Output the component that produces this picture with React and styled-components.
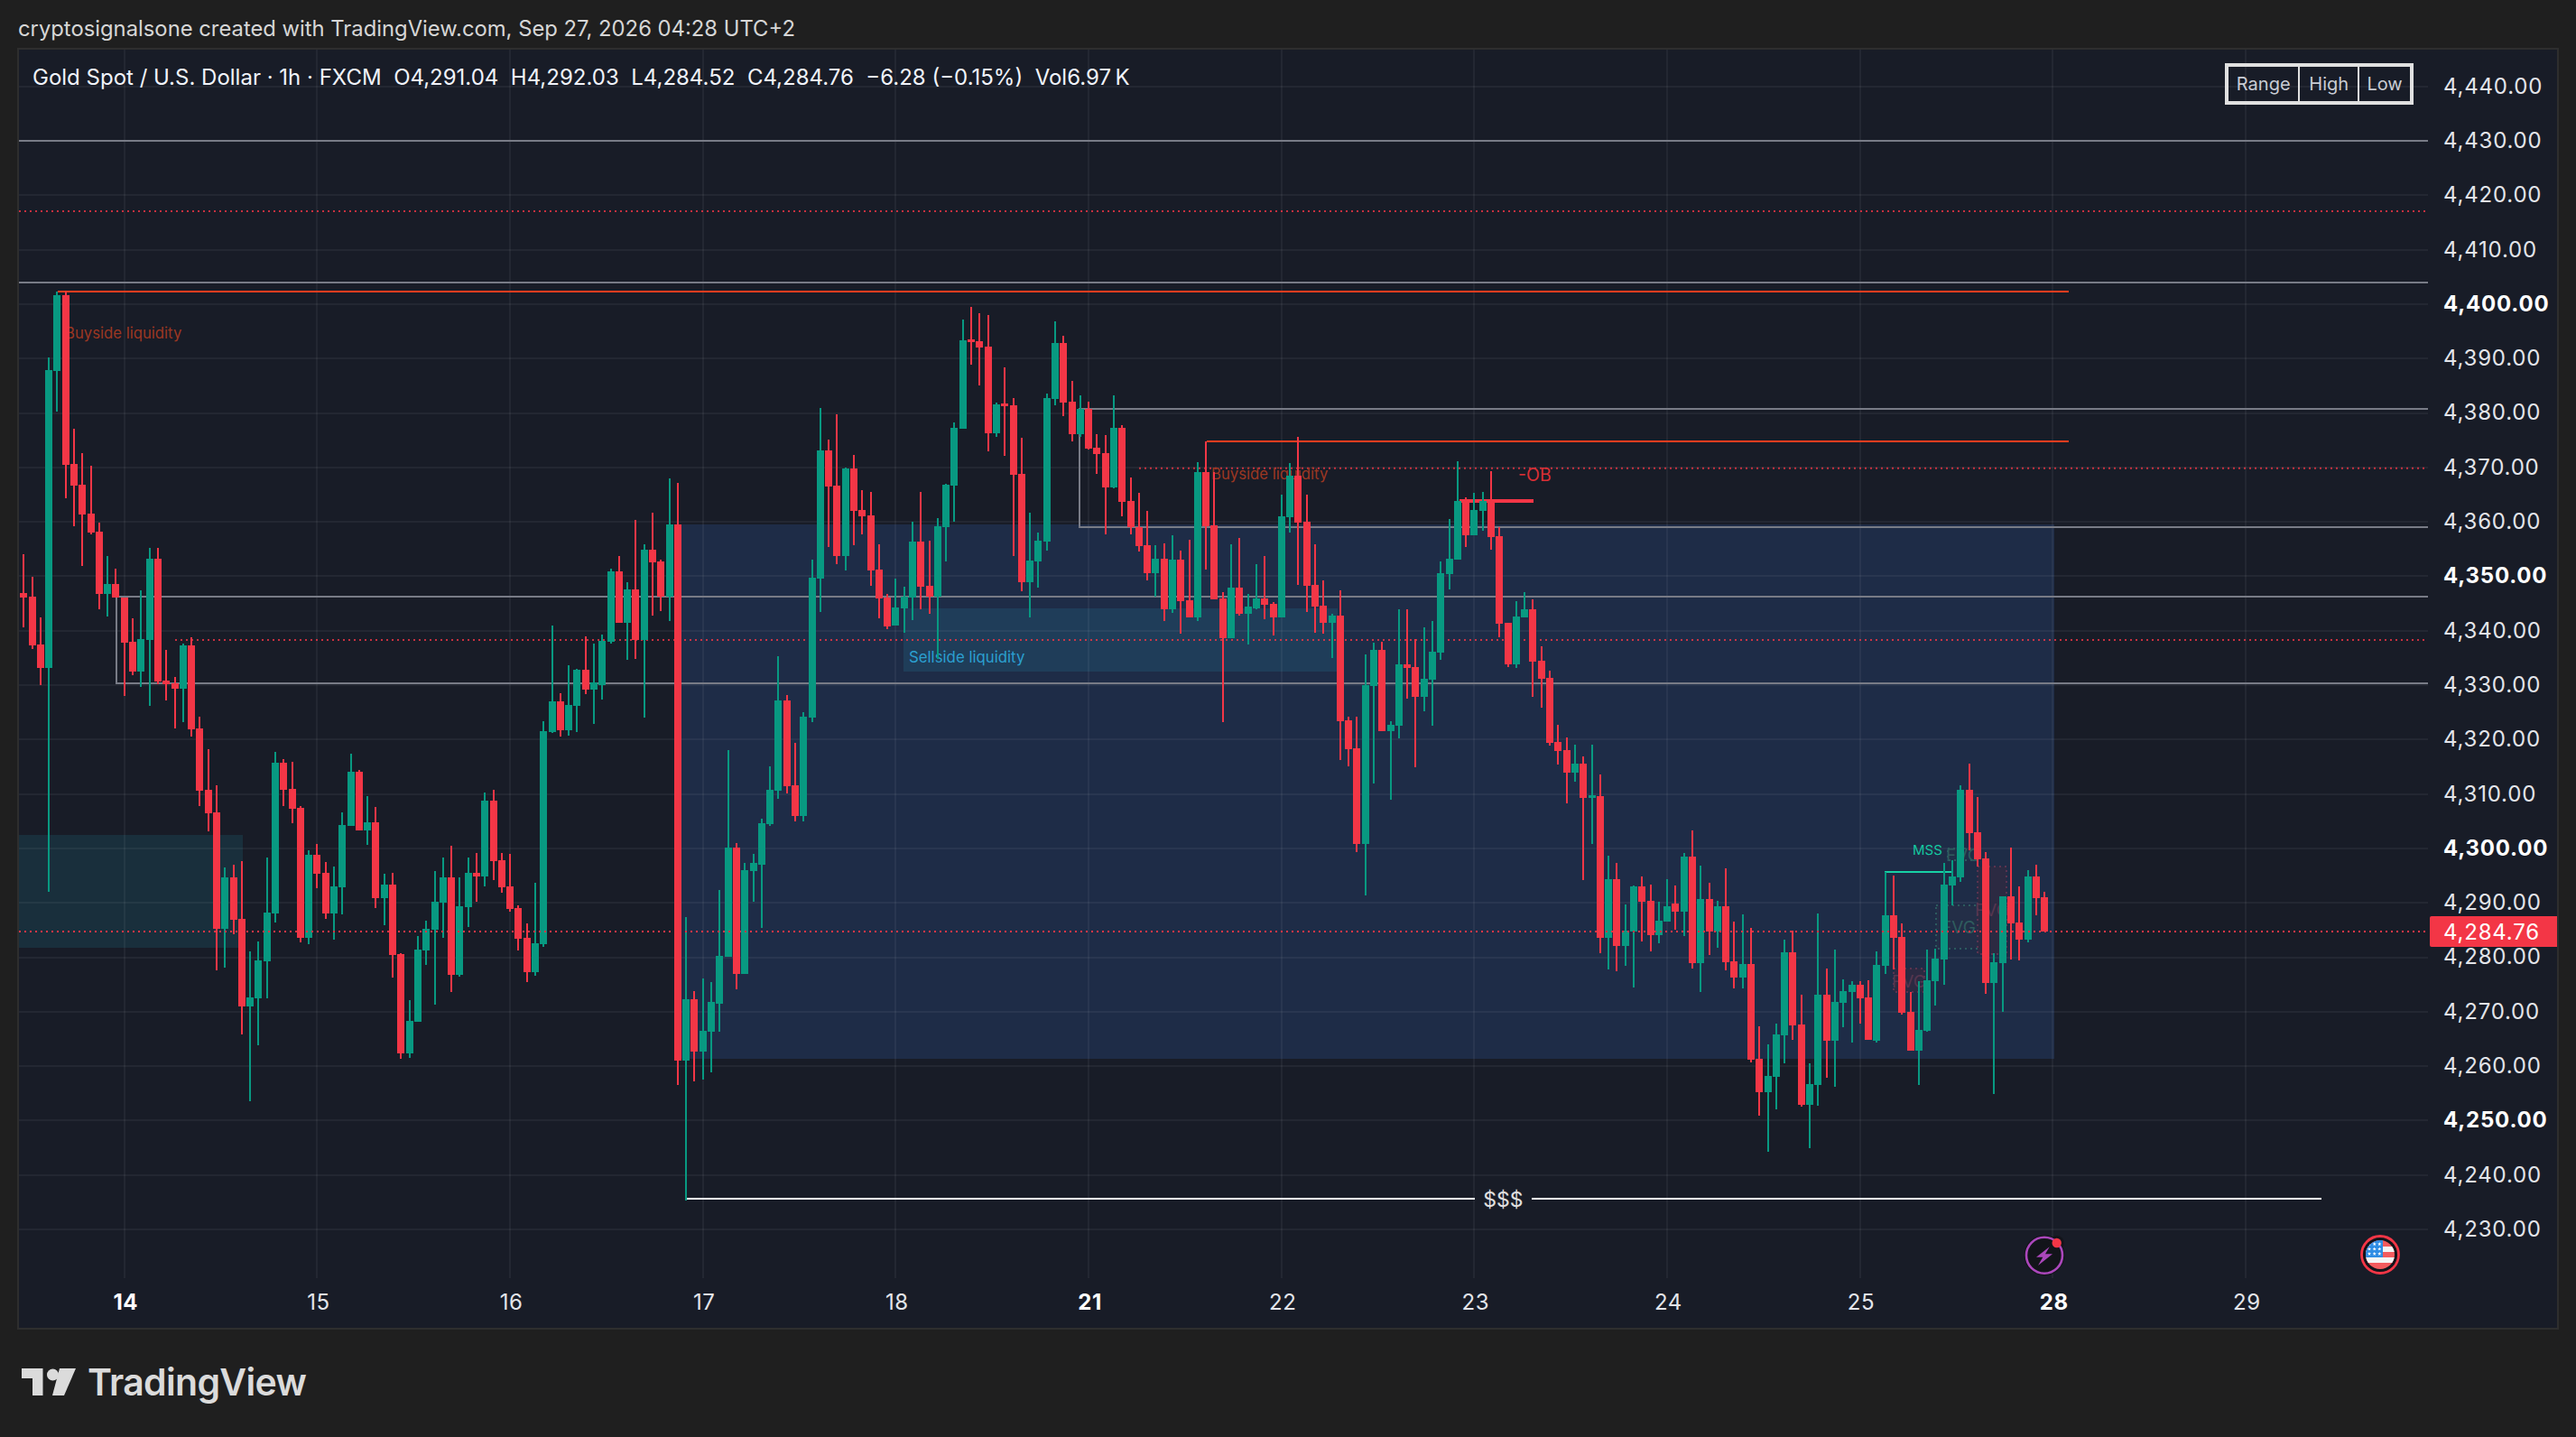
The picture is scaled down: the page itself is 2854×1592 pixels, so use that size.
import React from 'react'
import styled, { createGlobalStyle } from 'styled-components'

const UP = '#089981'
const DOWN = '#f33646'

const GlobalStyle = createGlobalStyle`
  html, body {
    margin: 0;
    background: #1f1f1f;
  }
  body {
    font-family: Inter, "Liberation Sans", sans-serif;
  }
`

const Page = styled.div`
  width: 2854px;
  height: 1592px;
  display: flex;
  flex-direction: column;
  background: #1f1f1f;
  overflow: hidden;
`
const Caption = styled.div`
  height: 53px;
  padding: 18px 0 0 20px;
  box-sizing: border-box;
  font-size: 23.8px;
  line-height: 28px;
  color: #d6d6d6;
  white-space: nowrap;
`
const ChartFrame = styled.div`
  margin-left: 19px;
  width: 2816px;
  height: 1420px;
  box-sizing: border-box;
  border: 2px solid #2e2e2e;
  background: #181c27;
  display: grid;
  grid-template-columns: 2669px 143px;
  grid-template-rows: 1361px 55px;
`
const Plot = styled.div`
  position: relative;
  overflow: hidden;
`
const PlotSvg = styled.svg`
  display: block;
  width: 2669px;
  height: 1361px;
`
const Legend = styled.div`
  position: absolute;
  left: 15px;
  top: 17px;
  display: flex;
  gap: 13.5px;
  font-size: 24px;
  line-height: 28px;
  color: #f0f3fa;
  white-space: nowrap;
`
const RangeBox = styled.div`
  position: absolute;
  left: 2444px;
  top: 15px;
  width: 209px;
  height: 46px;
  box-sizing: border-box;
  border: 4px solid #e0e0e0;
  display: flex;
`
const RangeCell = styled.div`
  width: ${p => p.$w}px;
  display: flex;
  align-items: center;
  justify-content: center;
  font-size: 20px;
  color: #c9ccd4;
  & + & {
    border-left: 2px solid #e0e0e0;
  }
`
const PriceScale = styled.div`
  position: relative;
  padding: 10px 0 0 17px;
`
const PriceLabel = styled.div`
  height: 60.3px;
  display: flex;
  align-items: center;
  font-size: 24px;
  letter-spacing: 0.8px;
  font-weight: ${p => (p.$major ? 700 : 400)};
  color: ${p => (p.$major ? '#ffffff' : '#e3e5ea')};
`
const LastPriceTag = styled.div`
  position: absolute;
  left: 2px;
  top: 960px;
  width: 141px;
  height: 34px;
  padding-left: 15px;
  box-sizing: border-box;
  display: flex;
  align-items: center;
  background: ${DOWN};
  border-radius: 2px 0 0 2px;
  font-size: 24px;
  letter-spacing: 0.8px;
  color: #ffffff;
`
const TimeScale = styled.div`
  display: flex;
  padding-left: 11.5px;
`
const TimeLabel = styled.div`
  width: 213.65px;
  height: 55px;
  padding-bottom: 3px;
  box-sizing: border-box;
  display: flex;
  align-items: center;
  justify-content: center;
  font-size: 24px;
  letter-spacing: 0.6px;
  font-weight: ${p => (p.$major ? 700 : 400)};
  color: ${p => (p.$major ? '#ffffff' : '#e3e5ea')};
`
const Brand = styled.div`
  display: flex;
  align-items: center;
  gap: 13px;
  padding: 35px 0 0 24px;
  color: #dbdbdb;
`
const BrandName = styled.span`
  font-size: 41px;
  line-height: 46px;
  font-weight: 600;
  letter-spacing: -0.7px;
`
const PlotLabel = styled.text`
  font-family: Inter, "Liberation Sans", sans-serif;
  font-size: ${p => p.$size}px;
  fill: ${p => p.$color};
  dominant-baseline: central;
`

const priceY = price => 95.7 + (4440 - price) * 6.03
const barX = n => Math.round(26.3 + 9.29 * n)

// bars are read off the screenshot as: colour wickTop bodyTop bodyBottom wickBottom
const segment = (start, y0, k, text) =>
  text.trim().split(/,\s*/).map((row, i) => {
    const [c, ...v] = row.split(' ')
    const [wt, bt, bb, wb] = v.map(a => y0 + Number(a) / k)
    return { n: start + i, up: c === 'g', wt, bt, bb, wb }
  })

const bars = [
  ...segment(-1, 550, 2.24, `g 240 240 270 270, r 143 240 251 325, r 199 249 370 379, r 300 367 426 468`),
  ...segment(3, 310, 3, `g 258 300 1290 2034, g 40 50 302 438, r 40 50 614 725, r 495 612 684 820,
    r 576 681 780 951, r 618 777 840 845`),
  ...segment(9, 550, 2.24, `r 64 87 241 279, g 148 217 241 297, r 180 217 250 250, r 250 250 363 494,
    r 302 361 435 443, g 233 354 435 472, g 128 155 356 520, r 128 155 459 466, r 381 457 466 507,
    r 447 463 477 575, g 365 370 477 560, r 349 370 578 596, r 547 576 730 768, r 627 728 786 831,
    r 717 784 1073 1176, g 921 945 1073 1169, r 914 945 1051 1086, r 905 1048 1266 1335,
    g 1129 1243 1266 1500, g 1104 1151 1245 1362, g 896 1033 1154 1245, g 634 661 1035 1057,
    r 652 661 728 768, r 659 726 775 811, r 768 773 1095 1107, g 878 889 1095 1111, r 862 889 936 972,
    r 907 934 1035 1048, g 918 968 1035 1100, g 784 815 970 1037, g 638 683 818 818, r 679 683 829 829,
    g 744 809 829 865, r 771 809 997 1021, g 936 963 997 1064, r 934 963 1138 1194, r 1133 1136 1382 1396,
    g 1250 1301 1382 1393, g 1091 1124 1304 1304, g 1053 1073 1127 1163, g 930 1006 1075 1261,
    g 896 945 1008 1095, r 867 945 1187 1230, g 945 1017 1187 1192, g 896 934 1019 1068, r 885 934 943 1006,
    g 735 755 943 968, r 728 755 905 952, r 885 903 970 983, r 887 968 1024 1030, r 1015 1021 1098 1127,
    r 1060 1095 1180 1205, g 959 1109 1180 1189, g 558 582 1111 1118, g 320 508 585 587, r 488 508 580 596,
    g 419 517 580 594, g 428 430 519 585, r 347 430 479 491, g 365 461 479 564, g 343 358 468 504,
    g 179 186 361 365, r 148 186 314 314, g 213 231 314 405`),
  ...segment(73, 300, 1.65, `r 456 583 675 710, g 500 510 675 817, r 442 510 533 631, r 528 531 596 622,
    g 380 464 596 641, r 388 464 1443 1489, g 1182 1332 1443 1699, r 1317 1332 1428 1482, g 1294 1390 1428 1478,
    g 1301 1337 1391 1466, g 1132 1253 1339 1391, g 876 1055 1254 1254, r 1046 1055 1286 1314, g 1083 1096 1286 1286,
    g 1066 1083 1098 1154, g 1002 1010 1085 1202, g 906 949 1012 1015, g 705 786 951 966, r 776 786 942 956,
    r 863 941 997 1007, g 807 815 997 1007, g 528 561 817 825, g 251 328 563 624, r 309 328 394 505, r 262 393 522 536,
    g 360 361 522 548, r 337 361 439 502, r 401 437 449 482, r 404 447 548 576, r 500 546 599 635, r 591 597 650 655,
    g 563 616 649 649, g 578 595 617 662, g 459 495 597 639, r 404 495 578 619, r 494 576 595 627, g 452 467 595 710,
    g 390 391 469 531, g 277 287 393 459, g 89 127 289 289, r 66 125 128 172, r 78 129 140 210, r 81 139 297 330,
    g 241 244 297 304, r 177 243 246 338, r 233 246 373 522, r 305 371 569 586, g 442 530 569 634, g 479 494 531 579,
    g 224 233 495 512, g 92 132 234 246, r 119 132 241 266, r 201 239 299 312, g 228 253 299 304, r 239 253 325 327,
    r 299 324 335 371, r 300 333 396 482, g 228 287 396 398, r 282 287 423 449, r 378 421 469 482, r 406 469 503 513,
    r 439 502 553 566, g 502 527 553 595, r 498 527 619 640, g 484 528 619 626`),
  ...segment(138, 400, 3, `r 630 660 797 905, r 595 795 852 852, g 336 369 852 863, r 267 369 549 692,
    r 370 546 792 792, r 768 789 921 1200, g 610 753 921 921, r 588 753 840 846, g 775 816 840 941,
    g 675 789 822 825, r 648 789 810 858, r 800 807 852 912`),
  ...segment(150, 450, 2.613, `g 256 319 612 612, g 165 201 321 365, r 89 201 337 517, r 256 335 520 596,
    r 400 517 580 655, r 504 578 627 659, g 601 606 627 729, r 533 606 911 1024, r 899 909 993 1043,
    r 899 990 1267 1291, g 719 808 1267 1416, g 685 706 810 1092, r 682 706 941 941, g 912 923 941 1139,
    g 588 747 925 962, r 588 747 758 847, r 673 755 841 1045, g 640 789 841 883, g 622 711 792 925,
    g 449 483 713 734, g 327 442 486 531, g 159 274 444 444, r 264 274 374 408, g 251 301 374 374,
    g 248 274 303 361, r 188 274 379 416, r 349 376 630 669, r 627 627 747 755, g 564 609 747 757,
    g 538 588 612 612, r 559 588 740 841, r 695 737 789 873, r 766 787 975 983, r 923 972 998 1037,
    r 959 996 1061 1150, g 980 1035 1061 1087, r 1014 1035 1134 1372, g 980 1127 1131 1267`),
  ...segment(188, 880, 3, `r -66 6 476 528, g 204 282 476 582, r 228 282 503 588, g 366 453 503 570,
    g 303 306 456 642, r 273 306 357 489, r 300 354 467 522, g 357 420 467 495, g 282 372 423 423,
    r 303 363 390 450, g 195 207 390 471, r 120 207 561 579, g 237 348 561 657, r 294 348 456 534,
    g 354 372 456 510, r 246 372 558 585, r 423 555 609 645, g 399 564 609 645, r 444 564 882 891,
    r 771 879 990 1068, g 831 936 990 1188, g 762 798 939 1047, g 483 525 801 894, r 453 525 768 816,
    r 666 765 1032 1038, g 894 963 1032 1176, g 396 666 966 1035`),
  ...segment(215, 880, 2.8, `r 540 622 764 878, g 482 644 764 906, g 574 610 647 722, g 580 591 613 770,
    r 580 591 632 711, r 576 630 762 762, g 487 529 764 770`),
  ...segment(222, 830, 3, `g 408 552 720 747, r 420 552 627 732, r 579 624 876 882, r 807 873 1002 1002,
    g 771 933 1002 1116, g 666 768 936 939, g 663 696 771 852, g 378 450 699 783, g 369 423 453 519,
    g 120 135 426 441, r 48 135 279 335, r 159 276 366 390, r 342 363 777 813, g 678 708 777 1146,
    g 489 489 711 873, r 327 489 579 699, r 456 576 633 702, g 402 423 633 642, r 384 423 495 552,
    r 474 492 606 606`),
]

const prices = Array.from({ length: 22 }, (_, i) => 4440 - i * 10)
const days = ['14', '15', '16', '17', '18', '21', '22', '23', '24', '25', '28', '29']
const majorDays = ['14', '21', '28']

function Star({ x, y }) {
  const points = [0, 1, 2, 3, 4, 5, 6, 7, 8, 9].map(i => {
    const r = i % 2 ? 0.9 : 2.2
    const a = (Math.PI / 5) * i - Math.PI / 2
    return `${x + r * Math.cos(a)},${y + r * Math.sin(a)}`
  })
  return <polygon points={points.join(' ')} fill="#fff" />
}

function Candles() {
  return (
    <g shapeRendering="crispEdges">
      {bars.map(b => {
        const color = b.up ? UP : DOWN
        const x = barX(b.n)
        return (
          <g key={b.n} fill={color}>
            <rect x={x - 1} y={b.wt} width="2" height={Math.max(b.wb - b.wt, 1)} />
            <rect x={x - 4} y={b.bt} width="8" height={Math.max(b.bb - b.bt, 3)} />
          </g>
        )
      })}
    </g>
  )
}

function FvgBox({ x, y, w, h, tint, dots, label, labelY }) {
  return (
    <g>
      <rect x={x} y={y} width={w} height={h} fill={tint} stroke={dots} strokeWidth="2" strokeDasharray="2 4" />
      <PlotLabel x={x + w / 2} y={labelY} $size={19} $color={label} textAnchor="middle">FVG</PlotLabel>
    </g>
  )
}

function Drawings() {
  return (
    <g>
      <g shapeRendering="crispEdges">
        <rect x="755" y="581" width="1521" height="592" fill="#1e2c47" />
        <rect x="21" y="925" width="248" height="125" fill="#192f3c" />
        <rect x="1001" y="674" width="481" height="70" fill="#1f3d59" />
        {prices.map(p => (
          <line key={p} x1="21" x2="2690" y1={priceY(p)} y2={priceY(p)} stroke="rgba(255,255,255,0.05)" strokeWidth="2" />
        ))}
        {days.map((d, i) => {
          const x = 137.8 + 213.65 * i
          return <line key={d} x1={x} x2={x} y1="55" y2="1416" stroke="rgba(255,255,255,0.05)" strokeWidth="2" />
        })}
        <g stroke="#787b86" strokeWidth="2" fill="none">
          <line x1="21" x2="2690" y1="156" y2="156" />
          <line x1="21" x2="2690" y1="313" y2="313" />
          <rect x="1196" y="452.7" width="1600" height="131" />
          <rect x="128.6" y="660.7" width="2700" height="96" />
        </g>
        <g stroke="#ff3d1f" strokeWidth="2">
          <line x1="64" x2="2292" y1="323" y2="323" />
          <line x1="1337" x2="2292" y1="489" y2="489" />
        </g>
        <line x1="1617" x2="1699" y1="555" y2="555" stroke={DOWN} strokeWidth="4" />
        <line x1="761" x2="1634" y1="1328" y2="1328" stroke="#fff" strokeWidth="2" />
        <line x1="1697" x2="2572" y1="1328" y2="1328" stroke="#fff" strokeWidth="2" />
      </g>
      <g stroke={DOWN} strokeWidth="2" strokeDasharray="2 4" opacity="0.8">
        <line x1="21" x2="2690" y1="234" y2="234" />
        <line x1="1262" x2="2690" y1="518.7" y2="518.7" />
        <line x1="194" x2="2690" y1="709" y2="709" />
      </g>
      <PlotLabel x="72" y="368.7" $size={16.7} $color="#9c3722">Buyside liquidity</PlotLabel>
      <PlotLabel x="1342" y="525" $size={16.7} $color="#9c3722">Buyside liquidity</PlotLabel>
      <PlotLabel x="1007" y="727.7" $size={16.8} $color="#2b9fd0">Sellside liquidity</PlotLabel>
      <PlotLabel x="1682" y="526" $size={19.5} $color="#d92f35">-OB</PlotLabel>
      <PlotLabel x="1665.5" y="1329" $size={23} $color="#e0e0e0" textAnchor="middle">$$$</PlotLabel>
      <PlotLabel x="2119" y="941" $size={15} $color="#14c8a0">MSS</PlotLabel>
      <FvgBox x={2145} y={1003} w={50} h={48} tint="#232e47" dots="#2c5a5e" label="#2f5c5e" labelY={1027} />
      <FvgBox x={2158} y={940} w={34} h={13} tint="#1f2f48" dots="#2c5a5e" label="#2f5c5e" labelY={947} />
      <FvgBox x={2191} y={960} w={32} h={97} tint="#2c2a42" dots="#5a3350" label="#553650" labelY={1008} />
      <FvgBox x={2098} y={1073} w={34} h={26} tint="#2c2a42" dots="#5a3350" label="#553650" labelY={1087} />
      <g fill="none" stroke="#17d1a5" strokeWidth="2.5" shapeRendering="crispEdges">
        <path d="M2089 1000V966H2163" />
      </g>
    </g>
  )
}

function EventMarks() {
  return (
    <g>
      <circle cx="2265" cy="1390.7" r="22.5" fill="#12141a" />
      <circle cx="2278.7" cy="1377" r="8" fill="#12141a" />
      <circle cx="2265" cy="1390.7" r="20" fill="#12141a" stroke="#ab47bc" strokeWidth="2.6" />
      <path d="M2270.7 1381.3L2256 1392.7H2263.3L2258 1402L2274 1389.3H2266Z" fill="#ab47bc" />
      <circle cx="2278.7" cy="1377" r="5.2" fill={DOWN} />

      <circle cx="2637" cy="1390" r="20.5" fill="#12141a" stroke={DOWN} strokeWidth="2.8" />
      <clipPath id="flag-clip">
        <circle cx="2637" cy="1390" r="16" />
      </clipPath>
      <g clipPath="url(#flag-clip)">
        <rect x="2620" y="1373" width="34" height="34" fill="#f35b5e" />
        <rect x="2620" y="1381" width="34" height="6" fill="#f5f5f5" />
        <rect x="2620" y="1393" width="34" height="6" fill="#f5f5f5" />
        <rect x="2620" y="1373" width="20" height="20" fill="#2f8de4" />
        {[1378.3, 1383.7, 1389].map(y =>
          [2625, 2630.7, 2636.3].map(x => <Star key={`${x}-${y}`} x={x} y={y} />)
        )}
      </g>
    </g>
  )
}

function TvMark() {
  return (
    <svg width="60" height="30" viewBox="0 0 60 30" fill="currentColor">
      <path d="M0 0H23.5V30H12V11H0Z" />
      <circle cx="34.5" cy="7" r="6.5" />
      <path d="M42 0H60L47 30H34Z" />
    </svg>
  )
}

export default function App() {
  return (
    <Page>
      <GlobalStyle />
      <Caption>cryptosignalsone created with TradingView.com, Sep 27, 2026 04:28 UTC+2</Caption>
      <ChartFrame>
        <Plot>
          <PlotSvg viewBox="21 55 2669 1361">
            <Drawings />
            <Candles />
            <line x1="21" x2="2690" y1="1032" y2="1032" stroke={DOWN} strokeWidth="2" strokeDasharray="2 4" />
            <EventMarks />
          </PlotSvg>
          <Legend>
            <span>Gold Spot / U.S. Dollar · 1h · FXCM</span>
            <span>O4,291.04</span>
            <span>H4,292.03</span>
            <span>L4,284.52</span>
            <span>C4,284.76</span>
            <span>−6.28 (−0.15%)</span>
            <span>Vol6.97{'\u2009'}K</span>
          </Legend>
          <RangeBox>
            <RangeCell $w={79}>Range</RangeCell>
            <RangeCell $w={65}>High</RangeCell>
            <RangeCell $w={57}>Low</RangeCell>
          </RangeBox>
        </Plot>
        <PriceScale>
          {prices.map(p => (
            <PriceLabel key={p} $major={p % 50 === 0}>{p.toLocaleString('en-US')}.00</PriceLabel>
          ))}
          <LastPriceTag>4,284.76</LastPriceTag>
        </PriceScale>
        <TimeScale>
          {days.map(d => (
            <TimeLabel key={d} $major={majorDays.includes(d)}>{d}</TimeLabel>
          ))}
        </TimeScale>
      </ChartFrame>
      <Brand>
        <TvMark />
        <BrandName>TradingView</BrandName>
      </Brand>
    </Page>
  )
}
